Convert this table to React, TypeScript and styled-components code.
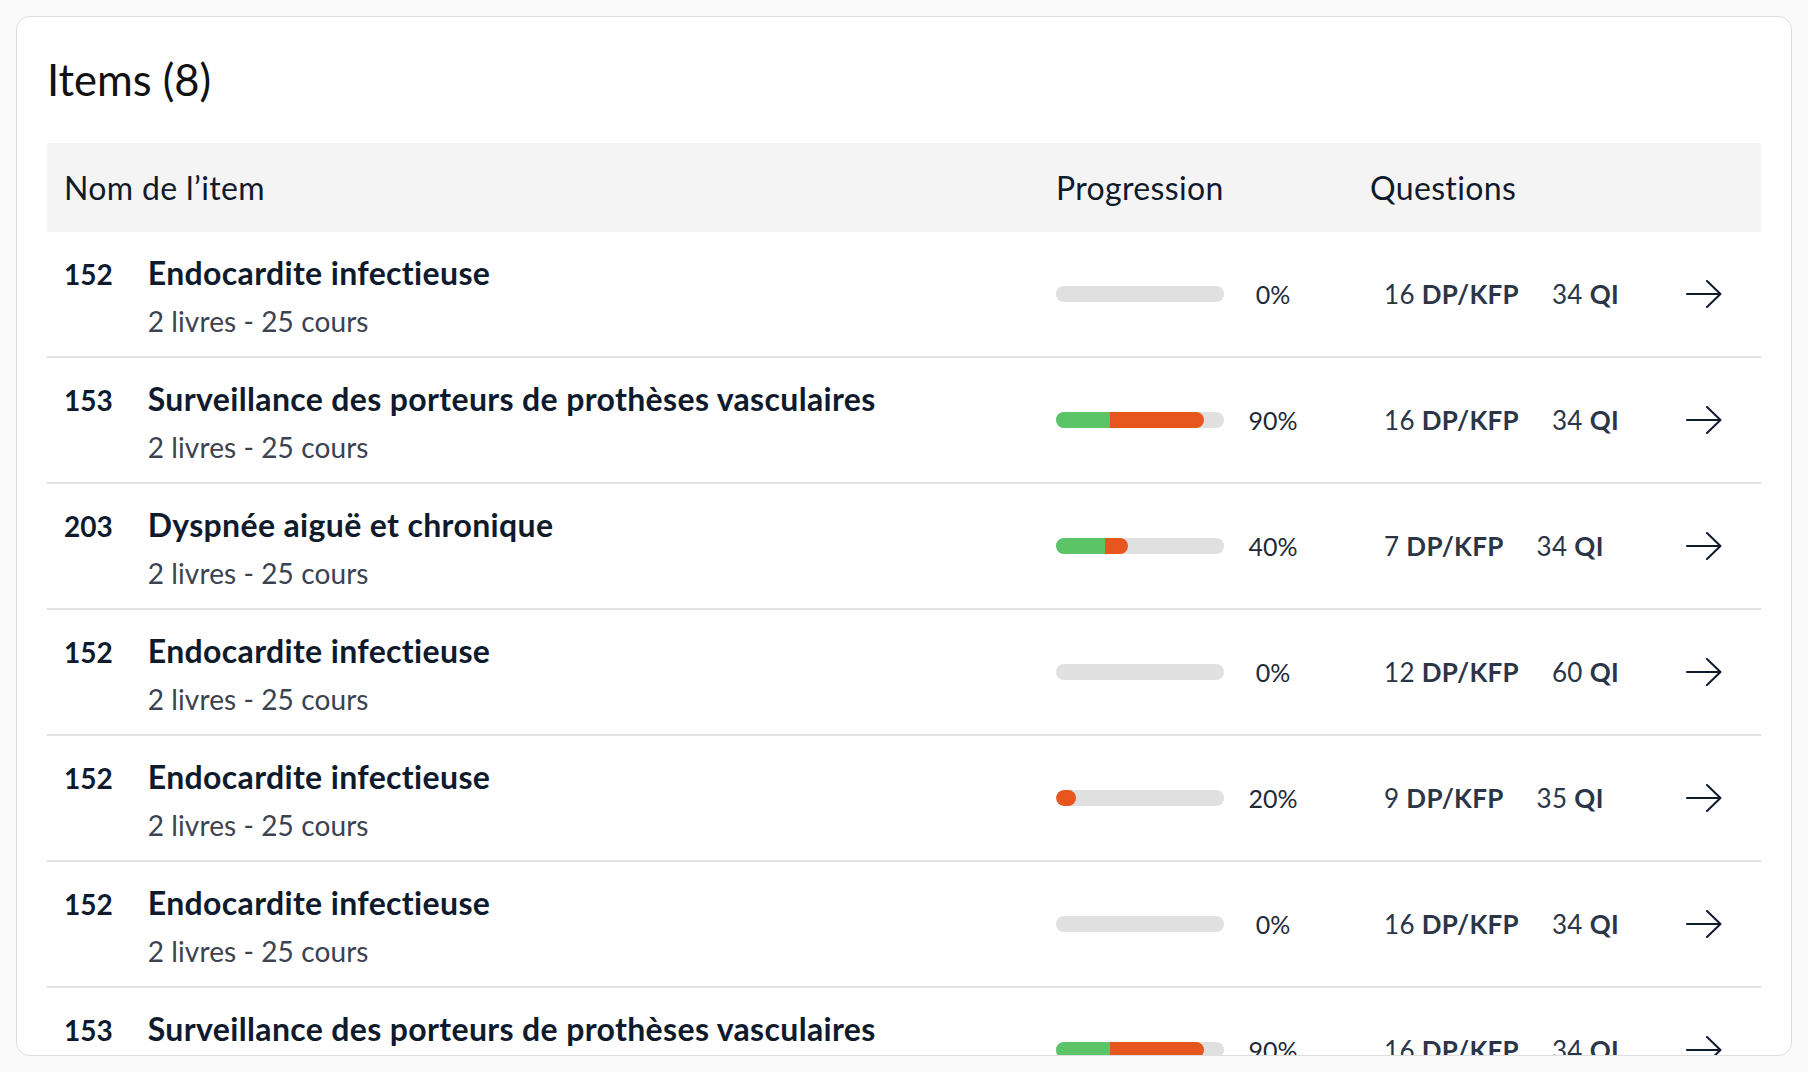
import React from "react";
import styled, { createGlobalStyle } from "styled-components";

const GlobalStyle = createGlobalStyle`
  html, body { margin: 0; padding: 0; background: #fafafa; }
  body { font-family: Lato, "Liberation Sans", sans-serif; -webkit-font-smoothing: antialiased; }
  * { box-sizing: border-box; }
`;

const Page = styled.div`
  padding: 16px;
  height: 1072px;
`;

const Card = styled.section`
  background: #ffffff;
  border: 1px solid #dedede;
  border-radius: 14px;
  height: 1040px;
  overflow: hidden;
  padding: 36px 30px 0;
`;

const Title = styled.h2`
  margin: 0 0 38px;
  font-size: 43.5px;
  font-weight: 400;
  line-height: 52px;
  color: #111111;
`;

const cols = "1009px 314px 1fr";

const HeaderRow = styled.div`
  display: grid;
  grid-template-columns: ${cols};
  align-items: center;
  height: 89px;
  background: #f4f4f4;
`;

const HeadCell = styled.div<{ $pl?: number }>`
  padding-left: ${(p) => p.$pl ?? 0}px;
  font-size: 32px;
  letter-spacing: 0.35px;
  color: #0f1a2c;
  line-height: 38px;
`;

const Row = styled.div`
  display: grid;
  grid-template-columns: ${cols};
  align-items: center;
  height: 126px;
  border-bottom: 2px solid #e3e3e3;
`;

const NameCell = styled.div`
  display: flex;
  align-items: baseline;
  gap: 35px;
  padding: 22px 0 19px 17px;
  align-self: start;
`;

const Code = styled.span`
  font-size: 28px;
  font-weight: 700;
  line-height: 38px;
  color: #0f1b2d;
`;

const NameBlock = styled.div`
  display: flex;
  flex-direction: column;
  gap: 13px;
`;

const ItemTitle = styled.span`
  font-size: 32px;
  font-weight: 700;
  letter-spacing: 0.35px;
  line-height: 38px;
  color: #0f1b2d;
  white-space: nowrap;
`;

const ItemMeta = styled.span`
  font-size: 28px;
  letter-spacing: 0.1px;
  line-height: 32px;
  color: #3b4250;
`;

const ProgressCell = styled.div`
  display: flex;
  align-items: center;
`;

const Track = styled.div`
  width: 168px;
  height: 16px;
  border-radius: 8px;
  background: #e0e0e0;
  overflow: hidden;
  display: flex;
`;

const Segment = styled.div<{ $color: string; $round: string }>`
  height: 100%;
  background: ${(p) => p.$color};
  border-radius: ${(p) => p.$round};
`;

const Percent = styled.span`
  width: 98px;
  text-align: center;
  font-size: 25px;
  color: #1f2937;
`;

const QuestionsCell = styled.div`
  display: flex;
  align-items: center;
  gap: 33px;
  padding-left: 14px;
  padding-right: 39px;
`;

const Count = styled.span`
  font-size: 26px;
  letter-spacing: 0.3px;
  color: #2b3548;
  white-space: nowrap;
  b {
    font-weight: 700;
  }
`;

const ArrowBtn = styled.span`
  margin-left: auto;
  display: flex;
  color: #0f1b2d;
`;

type Item = {
  code: string;
  title: string;
  pct: number;
  green: number;
  orange: number;
  dp: number;
  qi: number;
};

const items: Item[] = [
  { code: "152", title: "Endocardite infectieuse", pct: 0, green: 0, orange: 0, dp: 16, qi: 34 },
  { code: "153", title: "Surveillance des porteurs de prothèses vasculaires", pct: 90, green: 32, orange: 56, dp: 16, qi: 34 },
  { code: "203", title: "Dyspnée aiguë et chronique", pct: 40, green: 29, orange: 14, dp: 7, qi: 34 },
  { code: "152", title: "Endocardite infectieuse", pct: 0, green: 0, orange: 0, dp: 12, qi: 60 },
  { code: "152", title: "Endocardite infectieuse", pct: 20, green: 0, orange: 12, dp: 9, qi: 35 },
  { code: "152", title: "Endocardite infectieuse", pct: 0, green: 0, orange: 0, dp: 16, qi: 34 },
  { code: "153", title: "Surveillance des porteurs de prothèses vasculaires", pct: 90, green: 32, orange: 56, dp: 16, qi: 34 },
  { code: "203", title: "Dyspnée aiguë et chronique", pct: 40, green: 29, orange: 14, dp: 7, qi: 34 },
];

const Arrow = () => (
  <svg width="36" height="28" viewBox="0 0 36 28" fill="none">
    <path d="M1 14H34.5M21 1L34.5 14L21 27" stroke="currentColor" strokeWidth="2" strokeLinecap="round" strokeLinejoin="round" />
  </svg>
);

export default function App() {
  return (
    <>
      <GlobalStyle />
      <Page>
        <Card>
          <Title>Items (8)</Title>
          <HeaderRow>
            <HeadCell $pl={17}>Nom de l’item</HeadCell>
            <HeadCell>Progression</HeadCell>
            <HeadCell>Questions</HeadCell>
          </HeaderRow>
          {items.map((it, i) => (
            <Row key={i}>
              <NameCell>
                <Code>{it.code}</Code>
                <NameBlock>
                  <ItemTitle>{it.title}</ItemTitle>
                  <ItemMeta>2 livres - 25 cours</ItemMeta>
                </NameBlock>
              </NameCell>
              <ProgressCell>
                <Track>
                  {it.green > 0 && <Segment $color="#5bc466" $round="0" style={{ width: `${it.green}%` }} />}
                  {it.orange > 0 && (
                    <Segment
                      $color="#e8561f"
                      $round={it.green > 0 ? "0 8px 8px 0" : "8px"}
                      style={{ width: `${it.orange}%` }}
                    />
                  )}
                </Track>
                <Percent>{it.pct}%</Percent>
              </ProgressCell>
              <QuestionsCell>
                <Count>
                  {it.dp} <b>DP/KFP</b>
                </Count>
                <Count>
                  {it.qi} <b>QI</b>
                </Count>
                <ArrowBtn>
                  <Arrow />
                </ArrowBtn>
              </QuestionsCell>
            </Row>
          ))}
        </Card>
      </Page>
    </>
  );
}
